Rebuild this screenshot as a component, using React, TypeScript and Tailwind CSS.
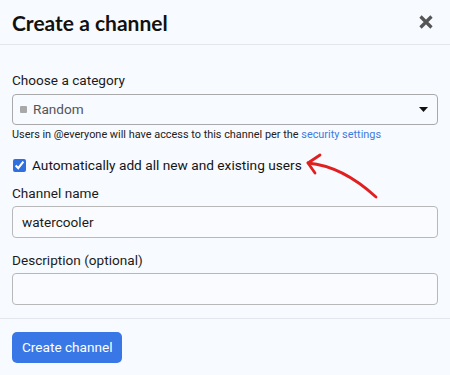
import { useState } from "react";

function CloseIcon() {
  return (
    <svg width="14" height="14" viewBox="0 0 14 14" className="block">
      <path d="M1.5 1.5 L12.5 12.5 M12.5 1.5 L1.5 12.5" stroke="#555" strokeWidth="3.2" strokeLinecap="butt" />
    </svg>
  );
}

function Caret() {
  return (
    <svg width="9" height="5" viewBox="0 0 9 5" className="block">
      <path d="M0 0 H9 L4.5 5 Z" fill="#111" />
    </svg>
  );
}

function App() {
  const [autoAdd, setAutoAdd] = useState(true);

  return (
    <div className="relative w-[450px] h-[375px] bg-[#f7faff] font-['Roboto',sans-serif] text-[#1b1b1b] overflow-hidden">
      <div className="flex items-center justify-between h-[45px] pl-3 pr-[17px] border-b border-[#e3e6ea]">
        <h2 className="font-['Lato',sans-serif] font-bold text-[21px] text-[#111] pt-[1px]">Create a channel</h2>
        <button className="p-0">
          <CloseIcon />
        </button>
      </div>

      <div className="flex flex-col px-3 pt-[27px] h-[274px] border-b border-[#e3e6ea]">
        <label className="text-[13.6px] leading-[16px]">Choose a category</label>
        <div className="mt-[6px] flex items-center h-[31px] border border-[#a9a9a9] rounded-[4px] pl-[7px] pr-[9px]">
          <span className="w-[7px] h-[7px] rounded-[1px] bg-[#a8a8a8]" />
          <span className="ml-[6px] text-[13.6px] text-[#555]">Random</span>
          <span className="ml-auto">
            <Caret />
          </span>
        </div>
        <p className="mt-[3px] text-[10.9px] leading-[14px] text-[#222]">
          Users in @everyone will have access to this channel per the{" "}
          <a className="text-[#3d7be0]">security settings</a>
        </p>

        <label className="mt-[15px] flex items-center gap-[6px] text-[13.7px] leading-[16px] text-[#151515]">
          <input
            type="checkbox"
            checked={autoAdd}
            onChange={() => setAutoAdd(!autoAdd)}
            className="w-[13px] h-[13px] m-0 ml-[1px] accent-[#2f6fde]"
          />
          Automatically add all new and existing users
        </label>

        <label className="mt-[12px] text-[13.6px] leading-[16px]">Channel name</label>
        <input
          defaultValue="watercooler"
          className="mt-[5px] h-[32px] border border-[#b8b8b8] rounded-[4px] px-[9px] text-[13.6px] bg-[#f9fbff] outline-none"
        />

        <label className="mt-[14px] text-[13.6px] leading-[16px]">Description (optional)</label>
        <input className="mt-[5px] h-[32px] border border-[#b8b8b8] rounded-[4px] px-[9px] text-[13.6px] bg-[#f9fbff] outline-none" />
      </div>

      <div className="px-3 pt-[13px]">
        <button className="h-[31px] px-[10px] rounded-[5px] bg-[#3a77e6] text-white text-[13.6px]">Create channel</button>
      </div>

      <svg className="absolute left-0 top-0 pointer-events-none" width="450" height="375">
        <path d="M308 163 C330 165 352 175 376 197" stroke="#e02020" strokeWidth="2.8" fill="none" strokeLinecap="round" />
        <path d="M320 155 L308 163 L315 173" stroke="#e02020" strokeWidth="2.8" fill="none" strokeLinecap="round" strokeLinejoin="round" />
      </svg>
    </div>
  );
}

export default App;
